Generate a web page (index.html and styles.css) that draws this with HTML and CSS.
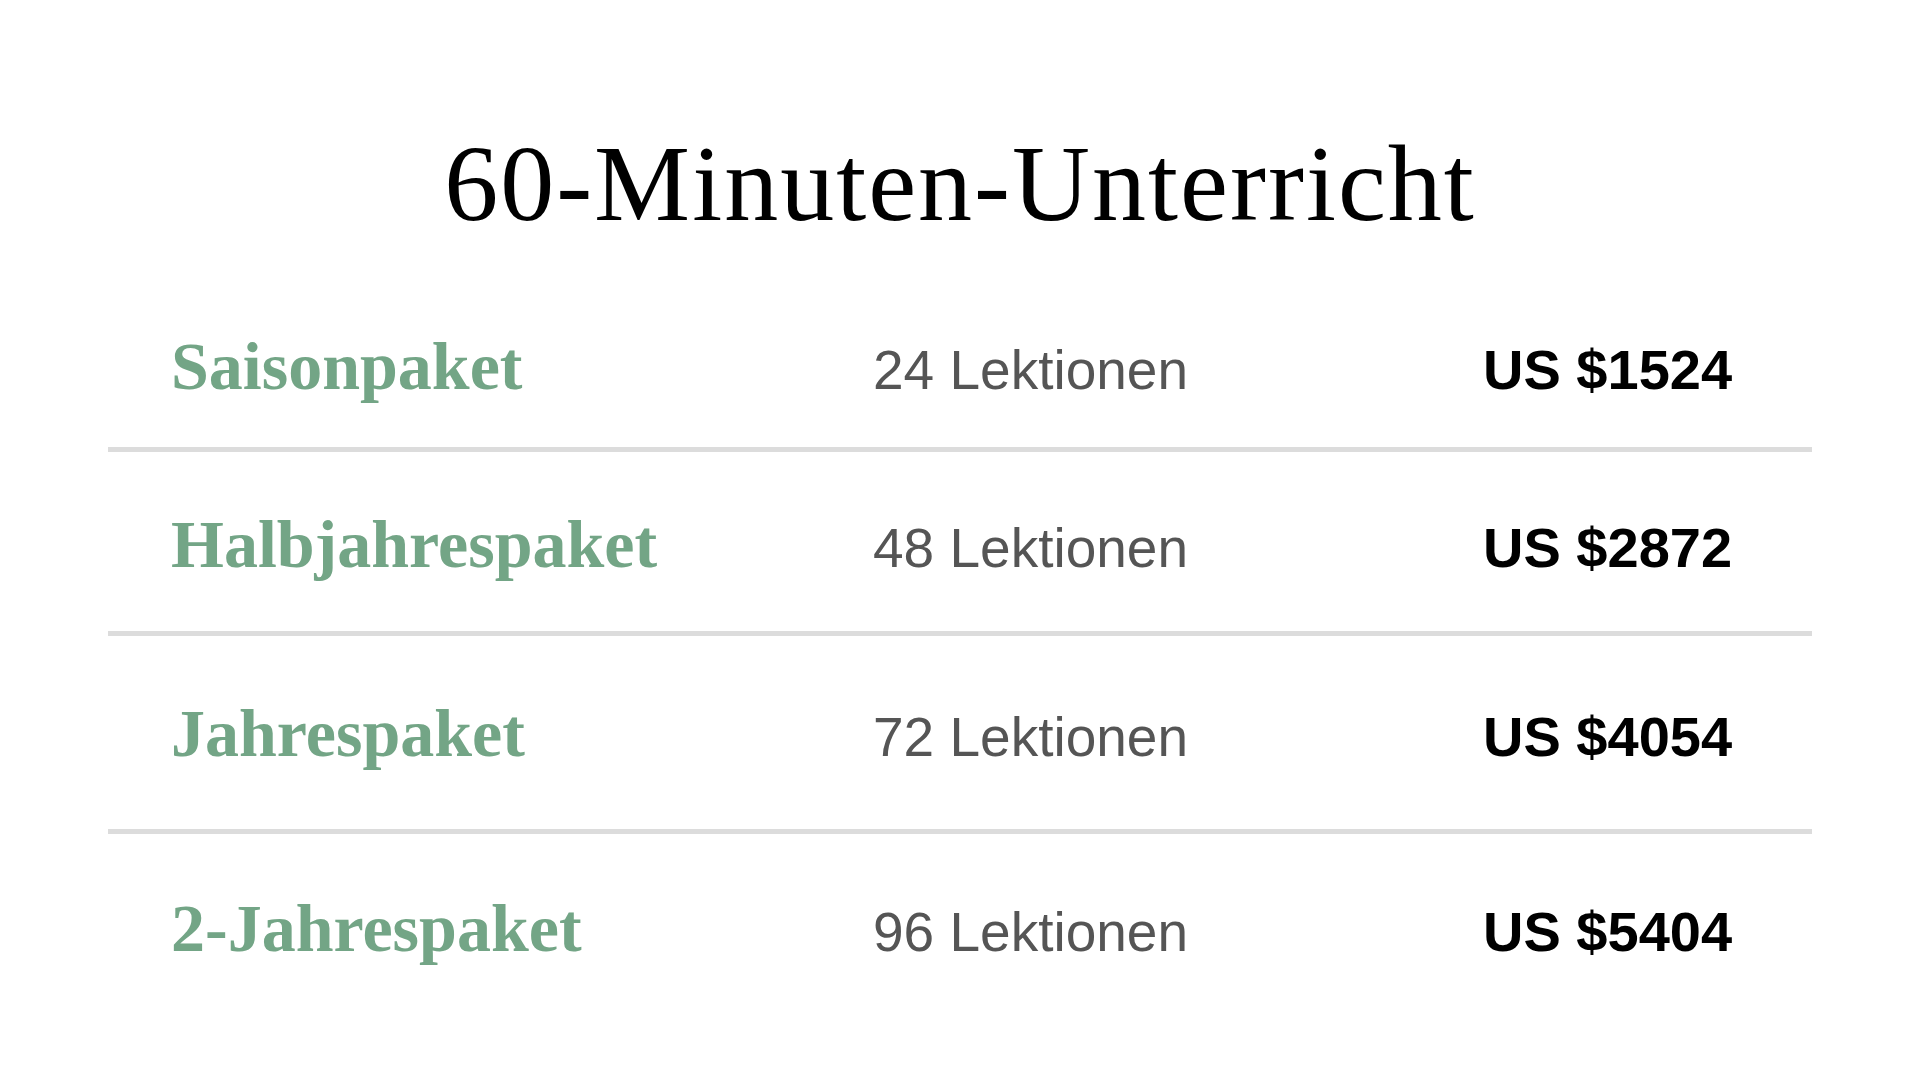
FILE: index.html
```html
<!DOCTYPE html>
<html lang="de">
<head>
<meta charset="utf-8">
<title>60-Minuten-Unterricht</title>
<link rel="stylesheet" href="styles.css">
</head>
<body>
<main class="page">
  <h1 class="title">60-Minuten-Unterricht</h1>
  <div class="table">
    <div class="row">
      <div class="name">Saisonpaket</div>
      <div class="count">24 Lektionen</div>
      <div class="price">US $1524</div>
    </div>
    <div class="row">
      <div class="name">Halbjahrespaket</div>
      <div class="count">48 Lektionen</div>
      <div class="price">US $2872</div>
    </div>
    <div class="row">
      <div class="name">Jahrespaket</div>
      <div class="count">72 Lektionen</div>
      <div class="price">US $4054</div>
    </div>
    <div class="row">
      <div class="name">2-Jahrespaket</div>
      <div class="count">96 Lektionen</div>
      <div class="price">US $5404</div>
    </div>
  </div>
</main>
</body>
</html>
```

FILE: styles.css
```css
html, body {
  margin: 0;
  padding: 0;
  background: #ffffff;
}

.page {
  width: 1920px;
  height: 1080px;
  overflow: hidden;
}

.title {
  margin: 119px 0 0 0;
  font-family: "Liberation Serif", "Times New Roman", serif;
  font-weight: 400;
  font-size: 108px;
  line-height: 130px;
  letter-spacing: 2px;
  text-align: center;
  color: #000000;
}

.table {
  margin: 0 108px;
  display: flex;
  flex-direction: column;
}

.row {
  display: grid;
  grid-template-columns: 702px 610px auto;
  align-items: baseline;
  padding-left: 63px;
  line-height: 80px;
  border-bottom: 5px solid #dcdcdc;
}

.row:nth-child(1) { padding-top: 77px; padding-bottom: 37px; }
.row:nth-child(2) { padding-top: 52px; padding-bottom: 43px; }
.row:nth-child(3) { padding-top: 57px; padding-bottom: 52px; }
.row:nth-child(4) { padding-top: 54px; border-bottom: none; }

.name {
  font-family: "Liberation Serif", "Times New Roman", serif;
  font-weight: 700;
  font-size: 68px;
  color: #73a586;
}

.count {
  font-family: "Liberation Sans", Arial, sans-serif;
  font-weight: 400;
  font-size: 55px;
  color: #555555;
}

.price {
  font-family: "Liberation Sans", Arial, sans-serif;
  font-weight: 700;
  font-size: 56px;
  color: #000000;
}
```
